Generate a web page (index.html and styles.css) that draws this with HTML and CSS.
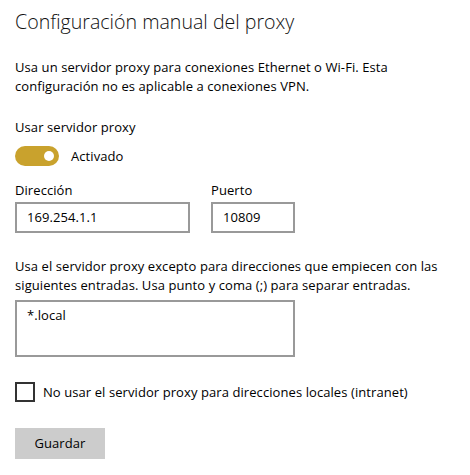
FILE: index.html
```html
<!DOCTYPE html>
<html lang="es">
<head>
<meta charset="utf-8">
<link rel="stylesheet" href="styles.css">
</head>
<body>
<div class="page">
  <h1 class="title">Configuración manual del proxy</h1>
  <p class="desc">Usa un servidor proxy para conexiones Ethernet o Wi-Fi. Esta configuración no es aplicable a conexiones VPN.</p>
  <div class="label use">Usar servidor proxy</div>
  <div class="toggle-row">
    <span class="toggle"><span class="knob"></span></span>
    <span class="toggle-text">Activado</span>
  </div>
  <div class="fields">
    <div class="field">
      <div class="label">Dirección</div>
      <div class="input addr">169.254.1.1</div>
    </div>
    <div class="field">
      <div class="label">Puerto</div>
      <div class="input port">10809</div>
    </div>
  </div>
  <p class="para">Usa el servidor proxy excepto para direcciones que empiecen con las siguientes entradas. Usa punto y coma (;) para separar entradas.</p>
  <div class="textarea">*.local</div>
  <div class="check-row">
    <span class="checkbox"></span>
    <span class="check-text">No usar el servidor proxy para direcciones locales (intranet)</span>
  </div>
  <div class="button">Guardar</div>
</div>
</body>
</html>
```
FILE: styles.css
```css
html, body {
  margin: 0;
  padding: 0;
  background: #ffffff;
}
.page {
  padding: 8px 15px 0 15px;
  font-family: "Open Sans", "Noto Sans", sans-serif;
  font-size: 13px;
  letter-spacing: 0.08px;
  line-height: 19px;
  color: #000000;
}
.title {
  margin: 0;
  font-size: 19.6px;
  font-weight: 300;
  letter-spacing: 0;
  line-height: 28px;
  color: #111111;
}
.desc {
  margin: 22px 0 0 0;
  width: 400px;
}
.label.use {
  margin-top: 22px;
}
.toggle-row {
  display: flex;
  align-items: center;
  gap: 12px;
  margin-top: 9px;
  height: 20px;
}
.toggle {
  position: relative;
  width: 44px;
  height: 20px;
  border-radius: 10px;
  background: #c9a22d;
  display: block;
}
.knob {
  position: absolute;
  right: 5px;
  top: 5px;
  width: 10px;
  height: 10px;
  border-radius: 50%;
  background: #ffffff;
}
.fields {
  display: flex;
  gap: 21px;
  margin-top: 15px;
}
.field .label {
  margin-bottom: 2px;
}
.input {
  box-sizing: border-box;
  height: 31px;
  border: 2px solid #999999;
  padding: 4px 10px;
  line-height: 19px;
}
.addr { width: 175px; }
.port { width: 84px; }
.para {
  margin: 24px 0 0 0;
}
.textarea {
  box-sizing: border-box;
  margin-top: 5px;
  width: 280px;
  height: 57px;
  border: 2px solid #999999;
  padding: 4px 10px;
}
.check-row {
  display: flex;
  align-items: center;
  gap: 8px;
  margin-top: 25px;
}
.checkbox {
  box-sizing: border-box;
  width: 20px;
  height: 20px;
  border: 2px solid #333333;
  display: block;
}
.button {
  margin-top: 26px;
  width: 90px;
  height: 31px;
  background: #cccccc;
  display: flex;
  align-items: center;
  justify-content: center;
}
```
